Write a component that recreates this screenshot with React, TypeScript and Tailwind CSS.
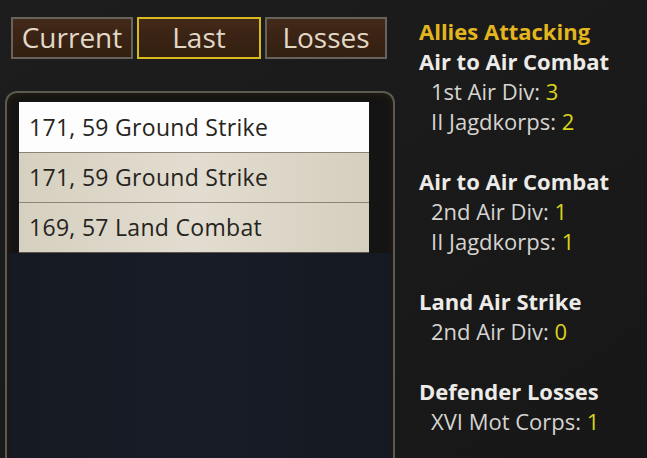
import React from "react";

const font = { fontFamily: '"Open Sans", "Noto Sans", sans-serif' };

type Line = { label: string; value: string };
type Group = { title: string; lines: Line[] };

const groups: Group[] = [
  {
    title: "Air to Air Combat",
    lines: [
      { label: "1st Air Div:", value: "3" },
      { label: "II Jagdkorps:", value: "2" },
    ],
  },
  {
    title: "Air to Air Combat",
    lines: [
      { label: "2nd Air Div:", value: "1" },
      { label: "II Jagdkorps:", value: "1" },
    ],
  },
  {
    title: "Land Air Strike",
    lines: [{ label: "2nd Air Div:", value: "0" }],
  },
  {
    title: "Defender Losses",
    lines: [{ label: "XVI Mot Corps:", value: "1" }],
  },
];

const rows = ["171, 59 Ground Strike", "171, 59 Ground Strike", "169, 57 Land Combat"];

const Tab: React.FC<{ label: string; active?: boolean; w: string }> = ({ label, active, w }) => (
  <button
    className={`${w} h-[42px] flex items-center justify-center text-[28px] text-[#e2d8c8] bg-gradient-to-b from-[#43291a] via-[#3a2314] to-[#33200f] ${
      active ? "border-2 border-[#d9b81e]" : "border-2 border-[#68625c]"
    }`}
  >
    <span className="leading-none -mt-[3px]">{label}</span>
  </button>
);

export default function App() {
  return (
    <div
      className="w-[647px] h-[458px] overflow-hidden flex bg-gradient-to-br from-[#1d1d1d] via-[#1a1a1a] to-[#171717]"
      style={font}
    >
      {/* left side */}
      <div className="w-[400px] shrink-0 flex flex-col">
        <div className="flex gap-[4px] pl-[11px] pt-[17px]">
          <Tab label="Current" w="w-[122px]" />
          <Tab label="Last" w="w-[124px]" active />
          <Tab label="Losses" w="w-[122px]" />
        </div>

        <div className="ml-[5px] mt-[32px] w-[390px] flex-1 rounded-t-[12px] border-2 border-b-0 border-[#5c5852] bg-[#141414] pt-[9px] px-[12px] shadow-[inset_0_0_8px_rgba(60,40,20,0.6)]">
          <div className="w-[350px] flex flex-col">
            {rows.map((r, i) => (
              <div
                key={i}
                className={`h-[50px] flex items-center pl-[10px] text-[23px] tracking-[0.3px] text-[#262420] ${
                  i === 0
                    ? "bg-[#fdfdfd]"
                    : "bg-gradient-to-r from-[#d6d0c0] via-[#e2ddd0] to-[#d5cfbf] border-t border-[#8a8476]"
                }`}
              >
                {r}
              </div>
            ))}
            <div className="h-[1px] bg-[#5a564e]" />
          </div>
          <div className="h-[220px] -mx-[10px] bg-gradient-to-r from-[#161a22] via-[#171c26] to-[#151921]" />
        </div>
      </div>

      {/* right side */}
      <div className="pl-[19px] pt-[16px] flex flex-col text-[22px] leading-[30px]">
        <div className="font-bold text-[#e3b51f]">Allies Attacking</div>
        {groups.map((g, gi) => (
          <div key={gi} className={gi > 0 ? "mt-[30px]" : ""}>
            <div className="font-bold text-[#ecebe8]">{g.title}</div>
            {g.lines.map((l, li) => (
              <div key={li} className="pl-[12px] text-[#d6d4d0]">
                {l.label} <span className="text-[#d9d31c]">{l.value}</span>
              </div>
            ))}
          </div>
        ))}
      </div>
    </div>
  );
}
